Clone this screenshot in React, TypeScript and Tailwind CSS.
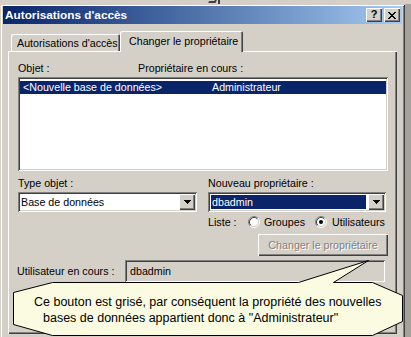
import React from "react";

const raised =
  "shadow-[inset_1px_1px_0_#ffffff,inset_-1px_-1px_0_#404040,inset_-2px_-2px_0_#808080]";
const sunken =
  "shadow-[inset_1px_1px_0_#808080,inset_-1px_-1px_0_#ffffff,inset_2px_2px_0_#404040,inset_-2px_-2px_0_#d4d0c8]";

function XGlyph() {
  return (
    <svg width="8" height="7" viewBox="0 0 8 7" fill="#000">
      <path d="M0 0h2v1H0zM6 0h2v1H6zM1 1h2v1H1zM5 1h2v1H5zM2 2h4v1H2zM3 3h2v1H3zM2 4h4v1H2zM1 5h2v1H1zM5 5h2v1H5zM0 6h2v1H0zM6 6h2v1H6z" />
    </svg>
  );
}

function Arrow() {
  return (
    <svg width="7" height="4" viewBox="0 0 7 4" fill="#000">
      <path d="M0 0h7v1H0zM1 1h5v1H1zM2 2h3v1H2zM3 3h1v1H3z" />
    </svg>
  );
}

function DropBtn() {
  return (
    <div className={`w-[16px] h-[16px] shrink-0 bg-[#d4d0c8] flex items-center justify-center ${raised}`}>
      <Arrow />
    </div>
  );
}

function Radio({ checked }: { checked?: boolean }) {
  return (
    <svg width="12" height="12" viewBox="0 0 12 12" className="shrink-0">
      <circle cx="6" cy="6" r="4.5" fill="#ffffff" />
      <path d="M2.11 9.89A5.5 5.5 0 0 1 9.89 2.11" stroke="#808080" fill="none" />
      <path d="M9.89 2.11A5.5 5.5 0 0 1 2.11 9.89" stroke="#ffffff" fill="none" />
      <path d="M2.82 9.18A4.5 4.5 0 0 1 9.18 2.82" stroke="#404040" fill="none" />
      <path d="M9.18 2.82A4.5 4.5 0 0 1 2.82 9.18" stroke="#d4d0c8" fill="none" />
      {checked && <circle cx="6" cy="6" r="2" fill="#000" />}
    </svg>
  );
}

function Callout() {
  const pts: [number, number][] = [
    [13, 292],
    [52, 282],
    [298, 282],
    [368, 260],
    [333, 282],
    [372, 282],
    [402, 295],
    [402, 321],
    [372, 335],
    [52, 335],
    [13, 324],
  ];
  return (
    <>
      <svg
        className="absolute left-0 top-0 pointer-events-none"
        width="411"
        height="337"
        viewBox="0 0 411 337"
      >
        <polygon
          points={pts.map(([x, y]) => `${x + 0.5},${y + 0.5}`).join(" ")}
          fill="#fbfbe1"
          stroke="#000"
          strokeWidth="1"
        />
      </svg>
      <div className="absolute left-[34px] top-[294px] flex flex-col text-[12.5px] leading-[16px] whitespace-nowrap text-black font-['Liberation_Sans',Arial,sans-serif]">
        <span>Ce bouton est grisé, par conséquent la propriété des nouvelles</span>
        <span className="ml-[9px]">bases de données appartient donc à "Administrateur"</span>
      </div>
    </>
  );
}

export default function App() {
  return (
    <div className="relative w-[411px] h-[337px] overflow-hidden bg-[#d4d0c8] font-['Liberation_Sans',Arial,sans-serif] text-[10.7px] leading-[13px] text-black">
      <div className="h-[4px] relative">
        <div className="absolute left-[209px] top-0 w-[7px] h-[3px] border-b-[2px] border-r-[2px] border-[#404040] skew-x-[-30deg]" />
        <div className="absolute left-[218px] top-0 w-[2px] h-[4px] bg-[#404040]" />
      </div>
      <div className="flex">
        <div className="w-[405px] h-[400px] shrink-0 bg-[#d4d0c8] pt-[2px] px-[3px] shadow-[inset_1px_1px_0_#d4d0c8,inset_-1px_-1px_0_#404040,inset_2px_2px_0_#ffffff,inset_-2px_-2px_0_#808080]">
          {/* title bar */}
          <div className="h-[18px] flex items-center bg-linear-to-r from-[#0a246a] to-[#a6caf0] pl-[2px] pr-[2px]">
            <span className="text-white font-bold text-[11.8px] leading-[14px]">Autorisations d'accès</span>
            <div className="ml-auto flex gap-[2px]">
              <div className={`w-[16px] h-[14px] bg-[#d4d0c8] flex items-center justify-center font-bold text-[11px] leading-[11px] ${raised}`}>
                <span className="-mt-[1px]">?</span>
              </div>
              <div className={`w-[16px] h-[14px] bg-[#d4d0c8] flex items-center justify-center ${raised}`}>
                <XGlyph />
              </div>
            </div>
          </div>
          {/* body */}
          <div className="px-[5px] pt-[6px]">
            <div className="flex items-end h-[21px] pl-[3px]">
              <div className="h-[17px] w-[109px] bg-[#d4d0c8] rounded-t-[2px] pl-[6px] pt-[3px] whitespace-nowrap shadow-[inset_1px_1px_0_#ffffff,inset_-1px_0_0_#404040,inset_-2px_0_0_#808080]">
                Autorisations d'accès
              </div>
              <div className="relative z-10 -mb-px h-[21px] w-[123px] bg-[#d4d0c8] rounded-t-[2px] pl-[9px] pt-[4px] whitespace-nowrap shadow-[inset_1px_1px_0_#ffffff,inset_-1px_0_0_#404040,inset_-2px_0_0_#808080]">
                Changer le propriétaire
              </div>
            </div>
            {/* panel */}
            <div className={`h-[283px] w-[389px] pl-[10px] pt-[11px] ${raised}`}>
              <div className="w-[370px] flex flex-col">
                <div className="flex h-[13px]">
                  <span className="w-[120px]">Objet :</span>
                  <span>Propriétaire en cours :</span>
                </div>
                <div className={`mt-[2px] h-[94px] bg-white p-[2px] pt-[4px] ${sunken}`}>
                  <div className="h-[13px] bg-[#0a246a] text-white flex whitespace-nowrap">
                    <span className="w-[192px] pl-[3px]">&lt;Nouvelle base de données&gt;</span>
                    <span>Administrateur</span>
                  </div>
                </div>
                <div className="mt-[6px] flex gap-[11px]">
                  <div className="w-[179px] flex flex-col">
                    <span className="h-[13px]">Type objet :</span>
                    <div className={`mt-[2px] h-[20px] bg-white flex items-center p-[2px] ${sunken}`}>
                      <span className="flex-1 pl-[1px] whitespace-nowrap">Base de données</span>
                      <DropBtn />
                    </div>
                  </div>
                  <div className="w-[178px] flex flex-col">
                    <span className="h-[13px]">Nouveau propriétaire :</span>
                    <div className={`mt-[2px] h-[20px] bg-white flex items-stretch p-[2px] ${sunken}`}>
                      <div className="flex-1 m-[1px] mr-[2px] bg-[#0a246a] text-white flex items-center pl-[1px]">dbadmin</div>
                      <DropBtn />
                    </div>
                  </div>
                </div>
                <div className="mt-[3px] h-[14px] flex items-center pl-[190px] whitespace-nowrap">
                  <span className="w-[40px]">Liste :</span>
                  <div className="w-[67px] flex items-center gap-[4px]">
                    <Radio />
                    <span>Groupes</span>
                  </div>
                  <div className="flex items-center gap-[5px]">
                    <Radio checked />
                    <span>Utilisateurs</span>
                  </div>
                </div>
                <div className="mt-[5px] flex justify-end">
                  <div className={`w-[130px] h-[22px] bg-[#d4d0c8] flex items-center justify-center text-[#808080] [text-shadow:1px_1px_0_#ffffff] whitespace-nowrap ${raised}`}>
                    Changer le propriétaire
                  </div>
                </div>
                <div className="mt-[4px] flex items-center">
                  <span className="w-[108px] -ml-px whitespace-nowrap">Utilisateur en cours :</span>
                  <div className={`w-[260px] h-[22px] bg-[#d4d0c8] flex items-center pl-[5px] ${sunken}`}>dbadmin</div>
                </div>
              </div>
            </div>
          </div>
        </div>
        <div className="flex-1 h-[400px] bg-[#a5a29c]" />
      </div>
      <Callout />
    </div>
  );
}
